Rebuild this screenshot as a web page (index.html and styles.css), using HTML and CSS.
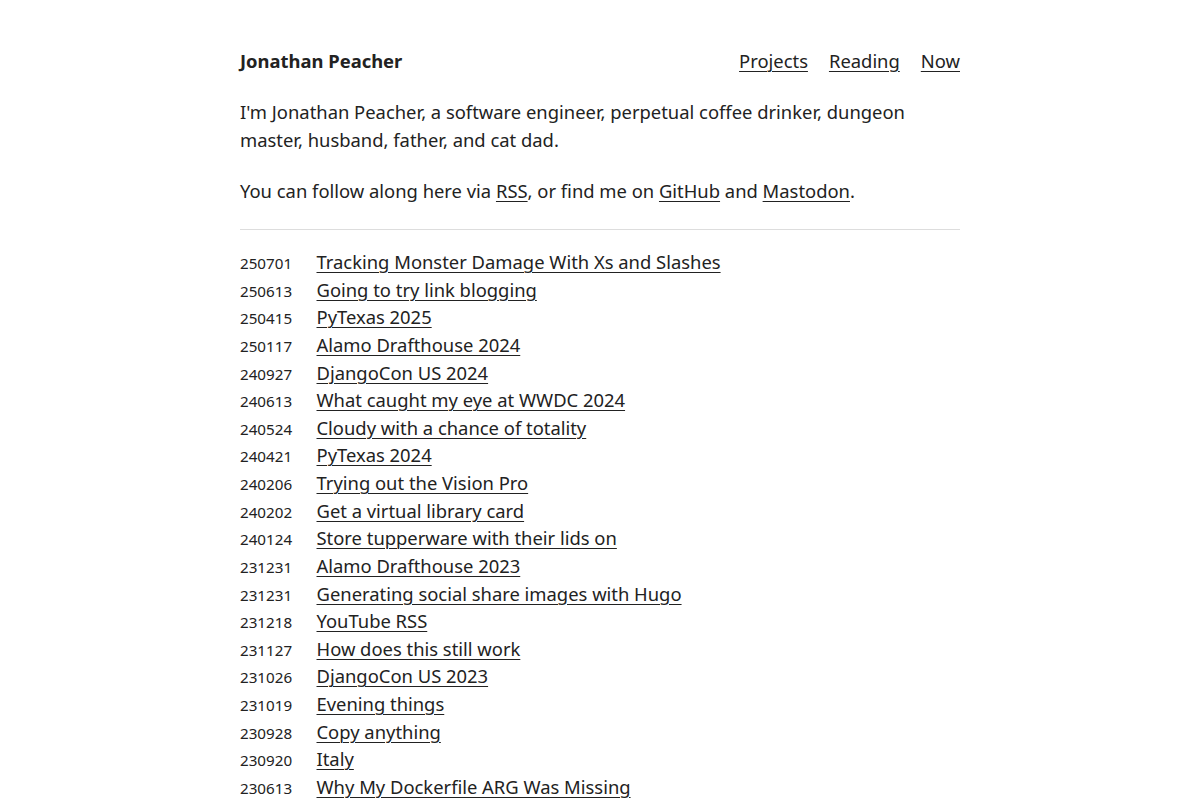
FILE: index.html
```html
<!DOCTYPE html>
<html lang="en">
<head>
  <meta charset="UTF-8">
  <meta name="viewport" content="width=device-width, initial-scale=1">
  <title>Jonathan Peacher</title>
  <link rel="stylesheet" href="styles.css">
</head>
<body>

  <div class="wrap">
    <header>
      <a class="site-name" href="#">Jonathan Peacher</a>
      <nav>
        <a href="#">Projects</a>
        <a href="#">Reading</a>
        <a href="#">Now</a>
      </nav>
    </header>

    <main>
      <p>I'm Jonathan Peacher, a software engineer, perpetual coffee drinker, dungeon master, husband, father, and cat dad.</p>
      <p>You can follow along here via <a href="#">RSS</a>, or find me on <a href="#">GitHub</a> and <a href="#">Mastodon</a>.</p>

      <hr>

      <ul class="posts">
        <li><span class="date">250701</span><a href="#">Tracking Monster Damage With Xs and Slashes</a></li>
        <li><span class="date">250613</span><a href="#">Going to try link blogging</a></li>
        <li><span class="date">250415</span><a href="#">PyTexas 2025</a></li>
        <li><span class="date">250117</span><a href="#">Alamo Drafthouse 2024</a></li>
        <li><span class="date">240927</span><a href="#">DjangoCon US 2024</a></li>
        <li><span class="date">240613</span><a href="#">What caught my eye at WWDC 2024</a></li>
        <li><span class="date">240524</span><a href="#">Cloudy with a chance of totality</a></li>
        <li><span class="date">240421</span><a href="#">PyTexas 2024</a></li>
        <li><span class="date">240206</span><a href="#">Trying out the Vision Pro</a></li>
        <li><span class="date">240202</span><a href="#">Get a virtual library card</a></li>
        <li><span class="date">240124</span><a href="#">Store tupperware with their lids on</a></li>
        <li><span class="date">231231</span><a href="#">Alamo Drafthouse 2023</a></li>
        <li><span class="date">231231</span><a href="#">Generating social share images with Hugo</a></li>
        <li><span class="date">231218</span><a href="#">YouTube RSS</a></li>
        <li><span class="date">231127</span><a href="#">How does this still work</a></li>
        <li><span class="date">231026</span><a href="#">DjangoCon US 2023</a></li>
        <li><span class="date">231019</span><a href="#">Evening things</a></li>
        <li><span class="date">230928</span><a href="#">Copy anything</a></li>
        <li><span class="date">230920</span><a href="#">Italy</a></li>
        <li><span class="date">230613</span><a href="#">Why My Dockerfile ARG Was Missing</a></li>
      </ul>
    </main>
  </div>

</body>
</html>
```

FILE: styles.css
```css
body {
  margin: 0;
  font-family: "Noto Sans", sans-serif;
  font-size: 18.4px;
  line-height: 28px;
  color: #222;
  background: #fff;
}

a {
  color: #222;
  text-decoration: underline;
  text-underline-offset: 3px;
  text-decoration-thickness: 1px;
}

.wrap {
  max-width: 720px;
  margin: 0 auto;
  padding-top: 47px;
}

header {
  display: flex;
  justify-content: space-between;
  align-items: center;
}

.site-name {
  font-weight: bold;
  text-decoration: none;
}

nav {
  display: flex;
  gap: 21px;
}

main p {
  margin: 23px 0 0;
}

hr {
  border: none;
  border-top: 1px solid #ddd;
  margin: 24px 0 18px;
}

.posts {
  list-style: none;
  margin: 0;
  padding: 0;
}

.posts li {
  display: flex;
  align-items: baseline;
  line-height: 27.63px;
}

.date {
  width: 76.5px;
  flex-shrink: 0;
  font-size: 15.2px;
  line-height: 1;
}
```
